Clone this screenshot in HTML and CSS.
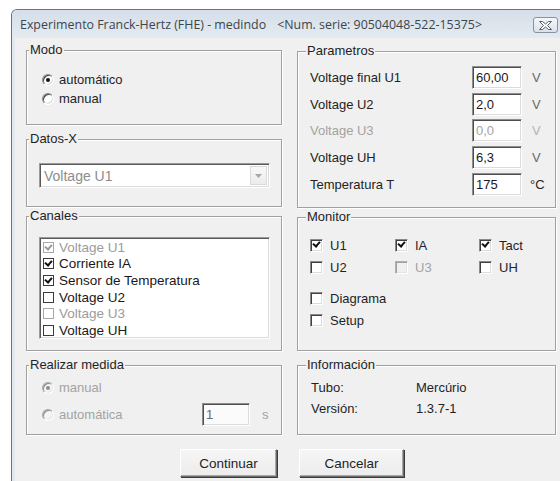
FILE: index.html
```html
<!DOCTYPE html>
<html lang="es">
<head>
<meta charset="utf-8">
<title>Experimento Franck-Hertz (FHE)</title>
<link rel="stylesheet" href="styles.css">
</head>
<body>
<div class="window">
  <div class="titlebar">
    <div class="caption">
      <span class="title">Experimento Franck-Hertz (FHE) - medindo</span>
      <span class="title serial">&lt;Num. serie: 90504048-522-15375&gt;</span>
    </div>
    <div class="close-btn" title="Cerrar">
      <svg width="15" height="9" viewBox="0 0 15 9">
        <path d="M1.5 0.5 H4.5 L7.5 3 L10.5 0.5 H13.5 L9.5 4.5 L13.5 8.5 H10.5 L7.5 6 L4.5 8.5 H1.5 L5.5 4.5 Z" fill="#ffffff" stroke="#56606c" stroke-width="1" stroke-linejoin="round"/>
      </svg>
    </div>
  </div>

  <div class="client">
    <div class="columns">
      <div class="col col-left">
        <fieldset class="group g-modo">
          <legend>Modo</legend>
          <div class="modo-body">
            <label class="row"><span class="radio checked"></span>automático</label>
            <label class="row"><span class="radio"></span>manual</label>
          </div>
        </fieldset>

        <fieldset class="group g-datos">
          <legend>Datos-X</legend>
          <div class="datos-body">
            <div class="combo">
              <span class="combo-text">Voltage U1</span>
              <span class="combo-btn">
                <svg width="7" height="4" viewBox="0 0 7 4"><path d="M0 0 H7 L3.5 4 Z" fill="#a7a7a7"/></svg>
              </span>
            </div>
          </div>
        </fieldset>

        <fieldset class="group g-canales">
          <legend>Canales</legend>
          <div class="canales-body">
            <ul class="listbox">
              <li class="item disabled"><span class="flatbox checked"></span>Voltage U1</li>
              <li class="item"><span class="flatbox checked"></span>Corriente IA</li>
              <li class="item"><span class="flatbox checked"></span>Sensor de Temperatura</li>
              <li class="item"><span class="flatbox"></span>Voltage U2</li>
              <li class="item disabled"><span class="flatbox"></span>Voltage U3</li>
              <li class="item"><span class="flatbox"></span>Voltage UH</li>
            </ul>
          </div>
        </fieldset>

        <fieldset class="group g-medida">
          <legend>Realizar medida</legend>
          <div class="medida-body">
            <label class="row disabled"><span class="radio checked"></span>manual</label>
            <div class="row row-auto disabled">
              <label class="auto-label"><span class="radio"></span>automática</label>
              <span class="field small">1</span>
              <span class="unit">s</span>
            </div>
          </div>
        </fieldset>
      </div>

      <div class="col col-right">
        <fieldset class="group g-param">
          <legend>Parametros</legend>
          <div class="param-body">
            <div class="prow"><span class="plabel">Voltage final U1</span><span class="field">60,00</span><span class="unit">V</span></div>
            <div class="prow"><span class="plabel">Voltage U2</span><span class="field">2,0</span><span class="unit">V</span></div>
            <div class="prow disabled"><span class="plabel">Voltage U3</span><span class="field">0,0</span><span class="unit">V</span></div>
            <div class="prow"><span class="plabel">Voltage UH</span><span class="field">6,3</span><span class="unit">V</span></div>
            <div class="prow"><span class="plabel">Temperatura T</span><span class="field">175</span><span class="unit unit-c">°C</span></div>
          </div>
        </fieldset>

        <fieldset class="group g-monitor">
          <legend>Monitor</legend>
          <div class="monitor-body">
            <div class="mgrid">
              <label class="check"><span class="box3d checked"></span>U1</label>
              <label class="check"><span class="box3d checked"></span>IA</label>
              <label class="check"><span class="box3d checked"></span>Tact</label>
              <label class="check"><span class="box3d"></span>U2</label>
              <label class="check disabled"><span class="box3d"></span>U3</label>
              <label class="check"><span class="box3d"></span>UH</label>
            </div>
            <div class="mlist">
              <label class="check"><span class="box3d"></span>Diagrama</label>
              <label class="check"><span class="box3d"></span>Setup</label>
            </div>
          </div>
        </fieldset>

        <fieldset class="group g-info">
          <legend>Información</legend>
          <div class="info-body">
            <div class="irow"><span class="ilabel">Tubo:</span><span>Mercúrio</span></div>
            <div class="irow"><span class="ilabel">Versión:</span><span>1.3.7-1</span></div>
          </div>
        </fieldset>
      </div>
    </div>

    <div class="actions">
      <button class="btn btn-ok" type="button">Continuar</button>
      <button class="btn btn-cancel" type="button">Cancelar</button>
    </div>
  </div>
</div>
</body>
</html>
```

FILE: styles.css
```css
* { box-sizing: border-box; }

html, body {
  margin: 0;
  width: 560px;
  height: 481px;
  overflow: hidden;
  background: #ffffff;
}

body {
  font-family: "Liberation Sans", Arial, sans-serif;
  font-size: 13px;
  color: #231f26;
}

/* window frame */
.window {
  margin: 9px 0 0 11px;
  width: 549px;
  height: 472px;
  border-left: 1px solid #6b737c;
  border-top: 1px solid #6b737c;
  border-top-left-radius: 6px;
  background: #e3e9ef;
  padding-left: 3px;
}

.titlebar {
  display: flex;
  align-items: flex-start;
  height: 28px;
  margin-left: -3px;
  padding-left: 8px;
  border-top-left-radius: 5px;
  background: linear-gradient(#d5dfe9, #e4eaf0);
}

.caption {
  flex: 1;
  display: flex;
  align-items: center;
  height: 28px;
  white-space: nowrap;
}

.title {
  font-family: "Open Sans", "Noto Sans", sans-serif;
  font-size: 12.4px;
  color: #3d454e;
}

.serial { margin-left: 11px; }

.close-btn {
  flex: none;
  margin: 7px 2px 0 0;
  width: 25px;
  height: 16px;
  display: flex;
  align-items: center;
  justify-content: center;
  border: 1px solid #8793a0;
  border-radius: 3px;
  background: linear-gradient(#f5f8fb, #d9e1e9);
}

/* client area */
.client {
  height: 443px;
  background: #f0f0f0;
  padding: 5px 0 0 11px;
}

.columns {
  display: flex;
  gap: 15px;
}

.col { display: flex; flex-direction: column; }
.col-left { width: 256px; }
.col-right { width: 259px; }

/* etched group boxes */
.group {
  margin: 0;
  padding: 0;
  min-width: 0;
  border: 1px solid #a0a0a0;
  box-shadow: inset 1px 1px 0 #ffffff, 1px 1px 0 #ffffff;
}

.group legend {
  padding: 0 1px;
  margin-left: 2px;
  line-height: 14px;
  font-size: 13px;
  background: #f0f0f0;
}

.col-right .group legend { margin-left: 8px; }

.g-modo { height: 82px; }
.g-datos { height: 75px; margin-top: 7px; }
.g-canales { height: 142px; margin-top: 2px; }
.g-medida { height: 77px; margin-top: 7px; }

.g-param { height: 164px; margin-top: 1px; }
.g-monitor { height: 141px; margin-top: 2px; }
.g-info { height: 77px; margin-top: 7px; }

.disabled { color: #a3a3a3; }

/* radio rows */
.modo-body { padding: 13px 0 0 15px; }

.row {
  display: flex;
  align-items: center;
  height: 19px;
}

.radio {
  position: relative;
  width: 12px;
  height: 12px;
  margin-right: 5px;
  border-radius: 50%;
  border: 1px solid;
  border-color: #8a8a8a #ffffff #ffffff #8a8a8a;
  box-shadow: inset 1px 1px 0 #444444, inset -1px -1px 0 #d8d8d8;
  background: #ffffff;
  flex: none;
}

.radio.checked::after {
  content: "";
  position: absolute;
  left: 3px;
  top: 3px;
  width: 4px;
  height: 4px;
  border-radius: 50%;
  background: #111111;
}

.disabled .radio {
  border-color: #a8a8a8 #ffffff #ffffff #a8a8a8;
  box-shadow: inset 1px 1px 0 #8c8c8c, inset -1px -1px 0 #e4e4e4;
  background: #f4f4f4;
}

.disabled .radio.checked::after { background: #8c8c8c; }

/* combo box */
.datos-body { padding: 17px 0 0 12px; }

.combo {
  display: flex;
  align-items: center;
  width: 231px;
  height: 25px;
  border: 1px solid;
  border-color: #9a9a9a #ffffff #ffffff #9a9a9a;
  box-shadow: inset 1px 1px 0 #5a5a5a, inset -1px -1px 0 #dcdcdc;
  background: #ffffff;
  padding: 0 2px 0 4px;
}

.combo-text {
  flex: 1;
  font-size: 14px;
  color: #8d8d8d;
}

.combo-btn {
  width: 17px;
  height: 19px;
  display: flex;
  align-items: center;
  justify-content: center;
  border: 1px solid #dadada;
  background: linear-gradient(#f8f8f8, #ececec);
}

/* channel list */
.canales-body { padding: 14px 0 0 12px; }

.listbox {
  list-style: none;
  margin: 0;
  padding: 1px 0 0 3px;
  width: 231px;
  height: 102px;
  overflow: hidden;
  border: 1px solid;
  border-color: #9a9a9a #ffffff #ffffff #9a9a9a;
  box-shadow: inset 1px 1px 0 #5a5a5a, inset -1px -1px 0 #dcdcdc;
  background: #ffffff;
}

.item {
  display: flex;
  align-items: center;
  height: 16.6px;
  font-size: 13.5px;
  color: #1b1720;
}

.item.disabled { color: #9c9c9c; }

.flatbox {
  position: relative;
  width: 11px;
  height: 11px;
  margin-right: 5px;
  border: 1px solid #3a3a3a;
  background: #ffffff;
  flex: none;
}

.item.disabled .flatbox { border-color: #a8a8a8; }

.flatbox.checked::after,
.box3d.checked::after {
  content: "";
  position: absolute;
  left: 2px;
  top: 0;
  width: 3px;
  height: 5px;
  border: solid #111111;
  border-width: 0 2px 2px 0;
  transform: rotate(40deg);
}

.item.disabled .flatbox.checked::after { border-color: #9a9a9a; }

/* realizar medida */
.medida-body { padding: 6px 0 0 15px; }

.row-auto {
  height: 23px;
  margin-top: 6px;
}

.auto-label {
  display: flex;
  align-items: center;
  width: 160px;
}

.field {
  display: flex;
  align-items: center;
  width: 50px;
  height: 23px;
  padding-left: 3px;
  border: 1px solid;
  border-color: #8e8e8e #ffffff #ffffff #8e8e8e;
  box-shadow: inset 1px 1px 0 #4e4e4e, inset -1px -1px 0 #dcdcdc;
  background: #ffffff;
  color: #1b1720;
}

.field.small {
  width: 48px;
  color: #6a6a6a;
  background: #fbfbfb;
}

.unit { margin-left: 12px; }

/* parametros */
.param-body { padding: 6px 0 0 12px; }

.prow {
  display: flex;
  align-items: center;
  height: 26.7px;
}

.plabel { width: 162px; }

.prow .unit { margin-left: 10px; color: #6a6a6a; }
.prow .unit-c { margin-left: 8px; color: #231f26; }
.prow.disabled .field { color: #a3a3a3; }
.prow.disabled .unit { color: #b4b4b4; }

/* monitor */
.monitor-body { padding: 10px 0 0 12px; }

.mgrid {
  display: grid;
  grid-template-columns: 85px 84px 70px;
  grid-auto-rows: 22px;
}

.mlist {
  display: grid;
  grid-auto-rows: 22px;
  margin-top: 9px;
}

.check {
  display: flex;
  align-items: center;
}

.box3d {
  position: relative;
  width: 13px;
  height: 13px;
  margin-right: 7px;
  border: 1px solid;
  border-color: #8a8a8a #ffffff #ffffff #8a8a8a;
  box-shadow: inset 1px 1px 0 #404040, inset -1px -1px 0 #dcdcdc;
  background: #ffffff;
  flex: none;
}

.box3d.checked::after { left: 3px; }

.check.disabled .box3d {
  border-color: #b0b0b0 #ffffff #ffffff #b0b0b0;
  box-shadow: inset 1px 1px 0 #a0a0a0, inset -1px -1px 0 #e4e4e4;
  background: #f0f0f0;
}

/* información */
.info-body { padding: 5px 0 0 13px; }

.irow {
  display: flex;
  line-height: 21px;
}

.ilabel { width: 105px; }

/* dialog buttons */
.actions {
  display: flex;
  gap: 22px;
  margin: 14px 0 0 154px;
}

.btn {
  height: 28px;
  font-family: "Liberation Sans", Arial, sans-serif;
  font-size: 13.5px;
  color: #231f26;
  background: linear-gradient(#f6f6f6, #ececec);
  border: 1px solid;
  border-color: #ffffff #6a6a6a #6a6a6a #ffffff;
  box-shadow: 1px 1px 0 #3c3c3c, inset -1px -1px 0 #a8a8a8;
  padding: 0;
}

.btn-ok { width: 97px; }
.btn-cancel { width: 105px; }
```
